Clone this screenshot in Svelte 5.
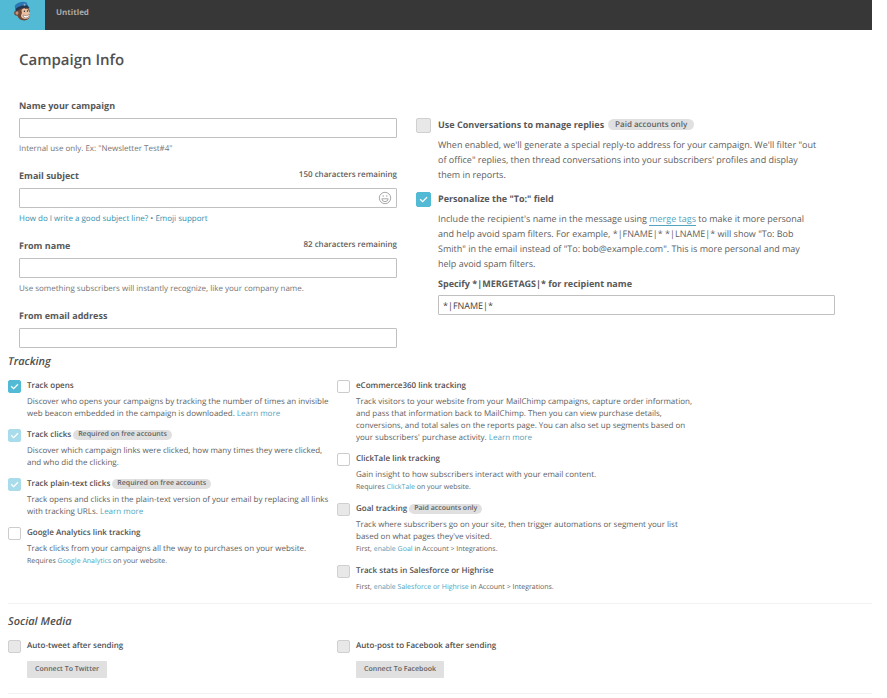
<script lang="ts">
	const leftTracking = [
		{
			id: 'opens',
			title: 'Track opens',
			checked: true,
			text: 'Discover who opens your campaigns by tracking the number of times an invisible web beacon embedded in the campaign is downloaded.',
			more: true
		},
		{
			id: 'clicks',
			title: 'Track clicks',
			badge: 'Required on free accounts',
			checked: true,
			disabled: true,
			text: 'Discover which campaign links were clicked, how many times they were clicked, and who did the clicking.'
		},
		{
			id: 'plain-text',
			title: 'Track plain-text clicks',
			badge: 'Required on free accounts',
			checked: true,
			disabled: true,
			text: 'Track opens and clicks in the plain-text version of your email by replacing all links with tracking URLs.',
			more: true
		},
		{
			id: 'analytics',
			title: 'Google Analytics link tracking',
			text: 'Track clicks from your campaigns all the way to purchases on your website.',
			note: ['Requires', 'Google Analytics', 'on your website.']
		}
	];

	const rightTracking = [
		{
			id: 'ecommerce',
			title: 'eCommerce360 link tracking',
			text: 'Track visitors to your website from your MailChimp campaigns, capture order information, and pass that information back to MailChimp. Then you can view purchase details, conversions, and total sales on the reports page. You can also set up segments based on your subscribers\' purchase activity.',
			more: true
		},
		{
			id: 'clicktale',
			title: 'ClickTale link tracking',
			text: 'Gain insight to how subscribers interact with your email content.',
			note: ['Requires', 'ClickTale', 'on your website.']
		},
		{
			id: 'goal',
			title: 'Goal tracking',
			badge: 'Paid accounts only',
			disabled: true,
			text: 'Track where subscribers go on your site, then trigger automations or segment your list based on what pages they\'ve visited.',
			note: ['First,', 'enable Goal', 'in Account > Integrations.']
		},
		{
			id: 'salesforce',
			title: 'Track stats in Salesforce or Highrise',
			disabled: true,
			note: ['First,', 'enable Salesforce or Highrise', 'in Account > Integrations.']
		}
	];

	const tracking: any[][] = [leftTracking, rightTracking];

	const social = [
		{ id: 'tweet', title: 'Auto-tweet after sending', button: 'Connect To Twitter' },
		{ id: 'facebook', title: 'Auto-post to Facebook after sending', button: 'Connect To Facebook' }
	];
</script>

<header class="topbar">
	<a class="logo" href="#home" aria-label="Home">
		<svg viewBox="0 0 20 22" width="20" height="22">
			<path d="M4 8 L14 6 Q17 9 17 14 Q17 20 11 20.500 Q6 20 4.500 16 Z" fill="#6d4636" />
			<ellipse cx="4" cy="13" rx="2.800" ry="2.800" fill="#6d4636" />
			<ellipse cx="4" cy="13" rx="1.500" ry="1.700" fill="#c9937a" />
			<path d="M8.500 10 Q11 7 12.500 9 Q15.500 8 15.800 11 Q18 13 17 15.500 Q16 19 12 19 Q8 18.500 8 15.500 Q9.500 13 8.500 10 Z" fill="#e8bfa2" />
			<path d="M10 15 Q14 17 17 14 Q16 18 13 18 Q10 18 10 15 Z" fill="#fff" stroke="#7d5545" stroke-width="0.500" />
			<circle cx="11.400" cy="11.300" r="0.700" fill="#2f2725" />
			<circle cx="14.500" cy="11" r="0.700" fill="#2f2725" />
			<path d="M2 8 Q1 4.500 5 3 Q10 1 13.500 2.500 L15.500 7 Q9 6 3 11 Z" fill="#2d78b4" />
			<path d="M2.500 9 Q8 4.500 14.500 5.500 L16.500 8 Q9 6.500 3 11.500 Z" fill="#25364f" />
			<circle cx="11.500" cy="4.700" r="1" fill="#8fb3cf" />
		</svg>
	</a>
	<span class="campaign-name">Untitled</span>
</header>

<main>
	<section class="info">
		<h1>Campaign Info</h1>
		<div class="info-grid">
			<div>
				<div class="field">
					<div class="field-head"><label for="name">Name your campaign</label></div>
					<input id="name" type="text" class="text-input" />
					<p class="hint">Internal use only. Ex: "Newsletter Test#4"</p>
				</div>
				<div class="field">
					<div class="field-head">
						<label for="subject">Email subject</label>
						<span class="remaining">150 characters remaining</span>
					</div>
					<div class="emoji-field">
						<input id="subject" type="text" class="text-input" />
						<button type="button" class="emoji" aria-label="Insert emoji">
							<svg viewBox="0 0 14 14" width="14" height="14" fill="none" stroke="#aaa">
								<circle cx="7" cy="7" r="5.7" />
								<path d="M3.8 7.8h6.4Q9.8 10.7 7 10.7T3.8 7.8Z" />
								<path d="M5.2 4.2v1.6M8.8 4.2v1.6" />
							</svg>
						</button>
					</div>
					<p class="hint">
						<a href="#subject-help">How do I write a good subject line?</a> • <a href="#emoji">Emoji support</a>
					</p>
				</div>
				<div class="field">
					<div class="field-head">
						<label for="from-name">From name</label>
						<span class="remaining">82 characters remaining</span>
					</div>
					<input id="from-name" type="text" class="text-input" />
					<p class="hint">Use something subscribers will instantly recognize, like your company name.</p>
				</div>
				<div class="field">
					<div class="field-head"><label for="from-email">From email address</label></div>
					<input id="from-email" type="email" class="text-input" />
				</div>
			</div>

			<div class="settings">
				<div class="setting">
					<input id="conversations" type="checkbox" class="check" disabled />
					<div class="setting-body">
						<div class="setting-head">
							<label for="conversations">Use Conversations to manage replies</label>
							<span class="badge">Paid accounts only</span>
						</div>
						<p>When enabled, we'll generate a special reply-to address for your campaign. We'll filter "out of office" replies, then thread conversations into your subscribers' profiles and display them in reports.</p>
					</div>
				</div>
				<div class="setting">
					<input id="personalize" type="checkbox" class="check" checked />
					<div class="setting-body">
						<div class="setting-head">
							<label for="personalize">Personalize the "To:" field</label>
						</div>
						<p>Include the recipient's name in the message using <a class="underlined" href="#merge-tags">merge tags</a> to make it more personal and help avoid spam filters. For example, *|FNAME|* *|LNAME|* will show "To: Bob Smith" in the email instead of "To: bob@example.com". This is more personal and may help avoid spam filters.</p>
						<div class="merge">
							<label for="merge">Specify *|MERGETAGS|* for recipient name</label>
							<input id="merge" type="text" class="text-input" value="*|FNAME|*" />
						</div>
					</div>
				</div>
			</div>
		</div>
	</section>

	<section class="options">
		<h2>Tracking</h2>
		<div class="columns">
			{#each tracking as column}
				<div class="column">
					{#each column as item}
						<div class="option">
							<input id={item.id} type="checkbox" class="check" checked={item.checked} disabled={item.disabled} />
							<div class="option-body">
								<div class="option-head">
									<label for={item.id}>{item.title}</label>
									{#if item.badge}
										<span class="badge">{item.badge}</span>
									{/if}
								</div>
								{#if item.text}
									<p>
										{item.text}
										{#if item.more}
											<a href="#learn-{item.id}">Learn more</a>
										{/if}
									</p>
								{/if}
								{#if item.note}
									<p class="note">{item.note[0]} <a href="#setup-{item.id}">{item.note[1]}</a> {item.note[2]}</p>
								{/if}
							</div>
						</div>
					{/each}
				</div>
			{/each}
		</div>
	</section>

	<section class="options social">
		<h2>Social Media</h2>
		<div class="columns">
			{#each social as item}
				<div class="option">
					<input id={item.id} type="checkbox" class="check" disabled />
					<div class="option-body">
						<div class="option-head"><label for={item.id}>{item.title}</label></div>
						<button type="button" class="connect">{item.button}</button>
					</div>
				</div>
			{/each}
		</div>
	</section>
</main>

<style>
	:global(body) {
		background: #fff;
		color: #606060;
		font-family: 'Open Sans', sans-serif;
		text-rendering: geometricPrecision;
	}

	:global(#app) {
		padding-right: 15px;
	}

	h1, h2, p {
		margin: 0;
	}

	a {
		color: #52a5c0;
		text-decoration: none;
	}

	label {
		color: #505050;
		font-weight: 600;
	}

	.topbar {
		display: flex;
		height: 30px;
		background: #373737;
	}

	.logo {
		display: flex;
		justify-content: center;
		width: 45px;
		background: #52bad5;
	}

	.campaign-name {
		padding-left: 11px;
		color: #aaa;
		font-size: 8px;
		font-weight: 700;
		line-height: 25px;
	}

	.info {
		padding: 18px 37px 0 19px;
	}

	h1 {
		margin-bottom: 26px;
		color: #505050;
		font-size: 15px;
		font-weight: 600;
		line-height: 24px;
	}

	.info-grid {
		display: grid;
		grid-template-columns: 378fr 419fr;
		column-gap: 19px;
		font-size: 9px;
		line-height: 15px;
	}

	.info-grid label {
		color: #585858;
		font-weight: 700;
	}

	.field {
		margin-bottom: 13px;
	}

	.field:last-child {
		margin-bottom: 0;
	}

	.field-head {
		display: flex;
		justify-content: space-between;
		margin-bottom: 5px;
	}

	.remaining {
		color: #606060;
		font-size: 8px;
		font-weight: 600;
		line-height: 13px;
	}

	.text-input {
		display: block;
		box-sizing: border-box;
		width: 100%;
		height: 20px;
		padding: 0 4px;
		border: 1px solid #c0c0c0;
		border-radius: 1px;
		background: #fff;
		color: #404040;
		font-family: inherit;
		font-size: 9px;
		text-rendering: inherit;
	}

	.emoji-field {
		position: relative;
	}

	.emoji {
		position: absolute;
		top: 3px;
		right: 5px;
		display: flex;
		padding: 0;
		border: 0;
		background: none;
	}

	.hint {
		margin-top: 5px;
		color: #757575;
		font-size: 8px;
		line-height: 12px;
	}

	.hint a {
		color: #3490ae;
	}

	.settings {
		padding-top: 19px;
	}

	.setting {
		display: flex;
		gap: 7px;
		margin-bottom: 9px;
	}

	.setting:last-child {
		margin-bottom: 0;
	}

	.setting-body {
		flex: 1;
	}

	.setting-body p {
		padding-right: 15px;
	}

	.setting-head,
	.option-head {
		display: flex;
		align-items: center;
	}

	.setting-head {
		gap: 4px;
		margin-bottom: 5px;
	}

	.check {
		display: grid;
		flex: none;
		place-content: center;
		box-sizing: border-box;
		width: 15px;
		height: 15px;
		margin: 1px 0 0;
		border: 1px solid #ccc;
		border-radius: 2px;
		background: #fff;
		appearance: none;
	}

	.check:disabled {
		border-color: #d0d0d0;
		background: #e8e8e8;
	}

	.check:checked {
		border-color: #52bad5;
		background: #52bad5;
	}

	.check:checked:disabled {
		border-color: #a8dcea;
		background: #a8dcea;
	}

	.check:checked::before {
		width: 9px;
		height: 9px;
		background: #fff;
		clip-path: polygon(8% 52%, 18% 42%, 40% 64%, 84% 20%, 94% 30%, 40% 84%);
		content: '';
	}

	.badge {
		padding: 0 7px;
		border-radius: 6px;
		background: #e0e0e0;
		color: #606060;
		font-size: 8px;
		font-weight: 600;
		line-height: 11px;
	}

	.underlined {
		border-bottom: 1px solid #52a5c0;
	}

	.merge {
		margin-top: 5px;
	}

	.merge .text-input {
		margin-top: 4px;
	}

	.options {
		margin-left: 8px;
		padding-bottom: 9px;
		border-bottom: 1px solid #f2f2f2;
		font-size: 8px;
		line-height: 12px;
	}

	h2 {
		padding: 6px 0 9px;
		color: #505050;
		font-size: 11px;
		font-style: italic;
		font-weight: 600;
		line-height: 15px;
	}

	.columns {
		display: grid;
		grid-template-columns: 329fr 535fr;
	}

	.column {
		display: flex;
		flex-direction: column;
		gap: 7px;
	}

	.option {
		display: flex;
		gap: 6px;
	}

	.option .check {
		width: 13px;
		height: 13px;
		margin-top: 2px;
	}

	.option-body {
		max-width: 344px;
		padding-right: 4px;
	}

	.option-head {
		gap: 2px;
		height: 16px;
		margin-bottom: 2px;
	}

	.option .badge {
		padding: 0 5px;
		font-size: 7px;
		line-height: 10px;
	}

	.note {
		font-size: 7px;
		line-height: 13px;
	}

	.social {
		padding-bottom: 15px;
	}

	.social h2 {
		padding-top: 10px;
	}

	.connect {
		display: block;
		height: 17px;
		margin-top: 7px;
		padding: 0 8px;
		border: 0;
		border-radius: 1px;
		background: #e0e0e0;
		color: #606060;
		font-family: inherit;
		font-size: 7px;
		font-weight: 600;
		text-rendering: inherit;
	}
</style>
